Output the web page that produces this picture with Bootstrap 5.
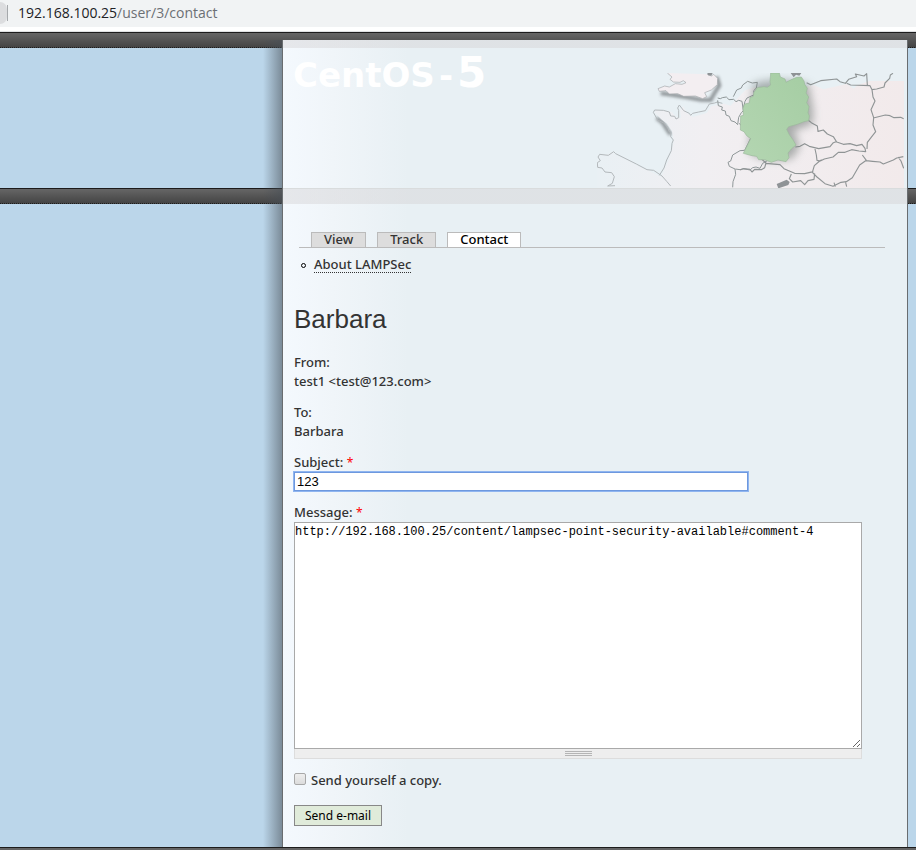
<!DOCTYPE html>
<html lang="en">
<head>
<meta charset="utf-8">
<meta name="viewport" content="width=device-width, initial-scale=1">
<title>Barbara | CentOS - 5</title>
<link href="https://cdn.jsdelivr.net/npm/bootstrap@5.3.0/dist/css/bootstrap.min.css" rel="stylesheet">
<style>
:root { --dark-top: #686868; --dark-end: #424242; --sky: #bbd6ea; --ink: #333; --edge: #696d70; }
body { font-family: "Noto Sans", sans-serif; font-size: 13px; font-weight: 500; line-height: 19px; color: var(--ink); background: var(--sky); }

/* address bar */
.address-bar { height: 32px; background: #f1f3f4; border-bottom: 1px solid #dfe1e3; box-shadow: inset 0 -4px #fff; font-family: "Open Sans", sans-serif; font-size: 14px; font-weight: 400; line-height: 26px; color: #6c7074; overflow: hidden; }
.address-bar strong { font-weight: 400; color: #202124; }
.pill-end { width: 7px; height: 22px; margin-top: 2px; background: #dcdddf; border-radius: 0 11px 11px 0; }
.bar-rule { width: 1px; height: 16px; margin-top: 5px; background: #a5a8ab; }
.address { margin-left: 10px; }

/* striped bands */
.band { background: linear-gradient(#1c1c1c, #1c1c1c) 0 0 / 100% 1px no-repeat,
  repeating-linear-gradient(90deg, #1c1c1c 0 1px, #4c4c4c 1px 2px) 0 15px / 100% 1px no-repeat,
  linear-gradient(var(--dark-top), var(--dark-end)) 0 0 / 100% 16px no-repeat, var(--sky); }
.band-top { padding-top: 8px; }
.band-bottom { height: 3px; background: #646464; border-top: 1px solid #1c1c1c; }
.gutter { flex: 0 0 283px; border-right: 1px solid var(--edge);
  background: linear-gradient(90deg, rgba(70,80,90,0), rgba(70,78,86,.55)) right / 19px 100% no-repeat; }
.gutter-end { flex: 0 0 9px; border-left: 1px solid var(--edge); }
.sheet-head { background: linear-gradient(rgba(212,210,212,.45), rgba(212,210,212,.45)) 0 0 / 100% 8px no-repeat,
  linear-gradient(90deg, #f4f9fe 0, #f0f5f9 50px, #e8f0f4 125px); }
.sheet-main { background: linear-gradient(#d9dcdd, #d9dcdd) 0 0 / 100% 1px no-repeat,
  linear-gradient(rgba(212,210,212,.45), rgba(212,210,212,.45)) 0 0 / 100% 16px no-repeat,
  linear-gradient(90deg, #f4f9fe 0, #f0f5f9 50px, #e8f0f4 125px); padding: 44px 22px 20px 11px; }

/* site name */
.site-name { font-family: "DejaVu Sans", sans-serif; font-weight: 700; font-size: 34px; line-height: 48px; margin: 9px 0 0 10px; white-space: nowrap; }
.site-name a { color: #fff; text-decoration: none; }
.site-name .dash { margin: 0 4px; }
.site-name .release { font-size: 42px; }
.map-art { width: 307px; height: 115px; margin: 33px 3px 0 0; }

/* tabs */
.tab-row { margin-left: 5px; padding-left: 12px; gap: 11px; border-bottom: 1px solid #bbb; line-height: 12px; }
.tab-row a { display: block; padding: 0 12px 2px; color: var(--ink); background: #ddd; border: 1px solid #bbb; border-bottom: 0; text-decoration: none; }
.tab-row a.current { color: #000; background: #fff; }
.side-links { list-style: none; padding-left: 7px; margin: 9px 0 0; }
.side-links li { display: flex; align-items: center; gap: 8px; }
.side-links li::before { content: ""; width: 5px; height: 5px; border: 1px solid #000; border-radius: 50%; }
.side-links a { color: var(--ink); line-height: 15px; text-decoration: none; border-bottom: 1px dotted #333; }
.page-title { font-family: "Liberation Sans", sans-serif; font-size: 26px; font-weight: 400; line-height: 32px; margin: 30px 0 18px; }

/* form */
.form-zone { padding-right: 23px; }
.form-part { margin-bottom: 12px; }
.form-part label, .form-part .caption { display: block; }
.need { color: #f00; font-weight: 400; font-size: 12px; }
.entry { display: block; border-radius: 0; border: 1px solid #a9a9a9; color: #000; background: #fff; padding: 1px 2px; }
#subject { width: 80%; height: 19px; font-family: "Liberation Sans", sans-serif; font-size: 13px; line-height: 15px; border-color: #6d98de; outline: 1px solid #8fb5f0; }
#message { width: 100%; height: 227px; font-family: "Liberation Mono", monospace; font-size: 12px; line-height: 16px; padding: 1px 0; resize: vertical; }
.grip { height: 10px; background: #eee; border: 1px solid #ddd; border-top: 0; }
.grip i { width: 27px; height: 5px; background: repeating-linear-gradient(#b5b5b5 0 1px, #eee 1px 2px); }
#copy { appearance: none; width: 12px; height: 12px; margin: 0 5px 4px 0; border: 1px solid #a8a8a8; border-radius: 2px; background: linear-gradient(#eee, #dcdcdc); }
#copy:checked { background: #555; }
.copy-part { margin-bottom: 15px; }
.send { font: 12px/15px "Noto Sans", sans-serif; color: #000; background: #e0ebda; border: 1px solid #888; border-radius: 0; padding: 2px 10px; }
</style>
<script src="https://cdn.jsdelivr.net/npm/bootstrap@5.3.0/dist/js/bootstrap.bundle.min.js"></script>
</head>
<body class="min-vh-100 d-flex flex-column">

<div class="address-bar d-flex align-items-start">
  <div class="pill-end"></div>
  <div class="bar-rule"></div>
  <div class="address"><strong>192.168.100.25</strong>/user/3/contact</div>
</div>

<header class="band band-top d-flex">
  <div class="gutter"></div>
  <div class="sheet-head flex-grow-1 d-flex justify-content-between">
    <div class="site-name"><a href="#">CentOS<span class="dash">-</span><span class="release">5</span></a></div>
    <svg class="map-art flex-shrink-0" viewBox="21 39 921 345" aria-hidden="true">
      <defs>
        <filter id="soft" x="-20%" y="-20%" width="150%" height="150%"><feGaussianBlur stdDeviation="13"/></filter>
        <filter id="softer" x="-20%" y="-40%" width="140%" height="200%"><feGaussianBlur stdDeviation="4"/></filter>
        <linearGradient id="land" x1="0" x2="1"><stop offset="0" stop-color="#e9f0f4"/><stop offset=".35" stop-color="#f1eff2"/><stop offset="1" stop-color="#f2eaeb"/></linearGradient>
        <linearGradient id="green" x1="0" x2="1" y1="1" y2="0"><stop offset="0" stop-color="#b4d6b2"/><stop offset="1" stop-color="#a5cda3"/></linearGradient>
      </defs>
      <!-- coastal shadows -->
      <g fill="none" stroke="#7c8184" stroke-width="12" filter="url(#softer)" opacity=".8">
        <path d="M212 100l35 4 45 8 40 7 30 1 12-22 14-22-8-26M200 174l18 14 14 22 10 14"/>
      </g>
      <!-- mainland -->
      <path fill="url(#land)" d="M22 384V285l32-3 15-8 6 10 30 14 45 22 30 14 33 16 22-48 12-38 4-20-5-30-14-22-18-14-20-20 2-8 30 2 20 4 12 15 12 4 3-4-3-20 10-12 8 18 20 14 22-6 20-6 14-20 18-4 20-4 20 6 16-18 28-28 30-10 20 4 28 5 130-14 26 12 70-16 22 14 10-10 36-13H942V384z"/>
      <!-- British coast -->
      <path fill="#f3eef1" stroke="#a5a8aa" stroke-width="2" d="M232 39l14 12-6 7 10 8 20 1 10-5 8 6-12 5-20-2-18 10-14-3-20 8 4 8 20-2 10 10 25-1 18 8 35-1 22 8 12-6-6-12 20-8 18-16 1-19-12-12-7 5-12-5"/>
      <path fill="#8f9396" d="M352 39h16l-4 8-10-1zM602 39h32l-6 8-10-3-7 8zM560 372l30-13 9 7-4 9-30 10z"/>
      <!-- western borders -->
      <g fill="none" stroke="#b3b8bb" stroke-width="3" stroke-linejoin="round">
        <path d="M75 377l-22 1 14-8 6-20-8-12-20-2-9-12-13-2-1-14 9-6-7-11 5-8 26 3 16-11 6 6 28 14 34 17 32 17 20 2 25 17 14 16 12 14M208 346l14-22 8-24 14-28 2-22 4-10-8-10 1-13-6-2-3-13-13-13-18-9-13-23 4-7 26 1 18 5 4 12 12 1 4 8 8-4 0-22-3-7 5-9 13 17 17 8 4 6 6-6 18-4 20-4 12-20 16-3 8-3 15 4"/>
      </g>
      <g fill="none" stroke="#8f9798" stroke-width="3" stroke-linejoin="round">
        <path d="M383 121l2 16 12 4-2 9 11 3 2 12 10 4 5 13 12 4 8 8 3-22 8-14 6-6-4-28-10-3-8 4-7-7-14 1-8-8-12 2-6 3-8-2"/>
        <path d="M430 110l10-20 14-6 4-9 15-11 14 5 15-2-3 17-8 8 2 12-22 10-6 10-5 20 4 20M447 190l12 11 29 22-14 28-10 20-14 1-22 13-6 18-8 4 4 12 17 8 2 16-8 22-1 17M436 327l14 2 10-3 20 4 8-7 10-2 12 4 8-15 14-8"/>
      </g>
      <!-- central and eastern borders -->
      <g fill="none" stroke="#8f9495" stroke-width="3.4" stroke-linejoin="round" transform="translate(450 -90)">
        <path d="M200 158l12 6 30-12 48-5 10 8 16 5 10-12 24-8-4-8 26 6 8-7 2 34M320 160l12 5 58 2 6 12 14-2 22-6 3-12 14-14 2-10 8-5M396 179l3 22 6 12-12 26 8 24-2 22 8 20-14 18-11 14-1 20M400 264l12-3 24-6 14 2 12 6 20-1 9 4"/>
        <path d="M204 270l10 8 18 10 2 16 16-4 12 12 18 8 10 16M166 351l14-2 14-8 14 8 28 7 34-6 10-12 8-3 22 8 20-2 20 6 16-4 9 12 2 10-20-2-22-4-20 8-20 0-16 14-26 6-12 6-10-2-2-16-4-18M367 375l12 16-20 14-22 38-18 12-16 2-24 12-24-8-24-20-14-14 6-20 16-14 6-4M378 392l20 2 22 2 10 6 30-12 10-6 20-4M474 381l9 12 8 22M0 420l10-4 20 2 6 8 8-8 20 1 10-6 4-14-16-14M78 400l42 4 12 12 32 14 30 1 26-6M154 432l-6 14 10 10 24-4 12 12 10-12 18-4 2-18M282 458l4 12M316 454l4 16"/>
      </g>
      <!-- highlighted country -->
      <g transform="translate(450 -90)">
        <path fill="#6e7773" opacity=".55" filter="url(#soft)" d="M40 160l54-10 60 2 52 10 14 80-2 40-56 20 18 48-24 36-54 6-58-14-18-14z"/>
        <path fill="url(#green)" stroke="#9bb89c" stroke-width="2" d="M92 129l26 0 3 12 14 6 3 10 18-9 14-6 14-1 8 12 2 10 8 12-4 14 8 12-6 17 7 12-3 18 4 10-2 14-14 3-20 8-26 7-6 8 8 16 10 14 10 17-14 12-10 12 3 14-9 12-24-5-20 7-20-8-18 0-6-10-14-2-26-7 8-16 14-28-12-9-8-12-11-5 1-42 8-2-1-22 5-12 14-3 2-16 10-4 2-12 10-14 20-3 10 2 10-7-2-10z"/>
      </g>
    </svg>
  </div>
  <div class="gutter-end"></div>
</header>

<main class="band d-flex flex-grow-1">
  <div class="gutter"></div>
  <div class="sheet-main flex-grow-1">
    <nav aria-label="User pages">
      <div class="tab-row d-flex">
        <a href="#">View</a>
        <a href="#">Track</a>
        <a class="current" href="#" aria-current="page">Contact</a>
      </div>
      <ul class="side-links"><li><a href="#">About LAMPSec</a></li></ul>
    </nav>
    <h1 class="page-title">Barbara</h1>
    <form class="form-zone">
      <div class="form-part"><span class="caption">From:</span>test1 &lt;test@123.com&gt;</div>
      <div class="form-part"><span class="caption">To:</span>Barbara</div>
      <div class="form-part">
        <label for="subject">Subject: <span class="need">*</span></label>
        <input class="entry" type="text" id="subject" value="123">
      </div>
      <div class="form-part">
        <label for="message">Message: <span class="need">*</span></label>
        <textarea class="entry" id="message" spellcheck="false">http://192.168.100.25/content/lampsec-point-security-available#comment-4</textarea>
        <div class="grip d-flex justify-content-center align-items-center"><i></i></div>
      </div>
      <div class="form-part copy-part d-flex align-items-center">
        <input type="checkbox" id="copy"><label for="copy">Send yourself a copy.</label>
      </div>
      <button class="send" type="button">Send e-mail</button>
    </form>
  </div>
  <div class="gutter-end"></div>
</main>
<footer class="band-bottom"></footer>

</body>
</html>
